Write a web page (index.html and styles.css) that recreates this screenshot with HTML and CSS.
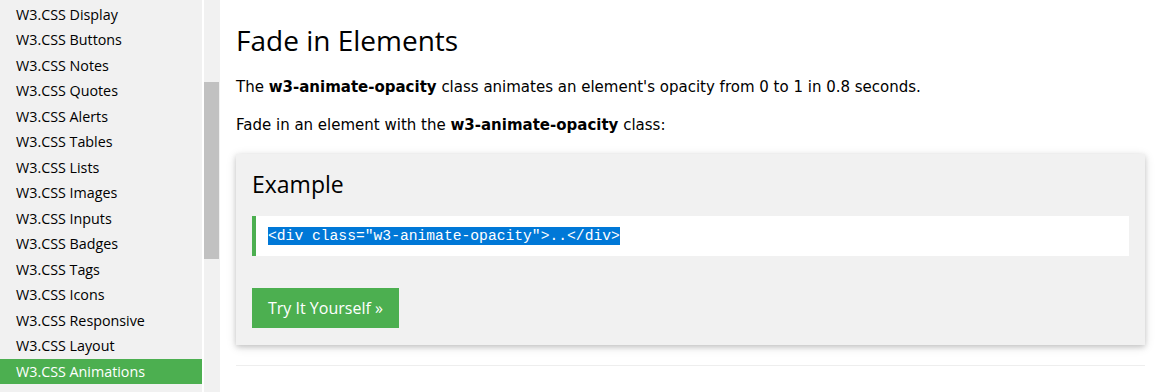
FILE: index.html
```html
<!DOCTYPE html>
<html lang="en">
<head>
    <meta charset="UTF-8">
    <meta name="viewport" content="width=device-width, initial-scale=1.0">
    <title>W3.CSS Animations</title>
    <link rel="stylesheet" href="styles.css">
</head>
<body>

<div class="layout">
    <div class="sidebar">
        <div class="nav">
            <a href="#">W3.CSS Display</a>
            <a href="#">W3.CSS Buttons</a>
            <a href="#">W3.CSS Notes</a>
            <a href="#">W3.CSS Quotes</a>
            <a href="#">W3.CSS Alerts</a>
            <a href="#">W3.CSS Tables</a>
            <a href="#">W3.CSS Lists</a>
            <a href="#">W3.CSS Images</a>
            <a href="#">W3.CSS Inputs</a>
            <a href="#">W3.CSS Badges</a>
            <a href="#">W3.CSS Tags</a>
            <a href="#">W3.CSS Icons</a>
            <a href="#">W3.CSS Responsive</a>
            <a href="#">W3.CSS Layout</a>
            <a href="#" class="active">W3.CSS Animations</a>
        </div>
    </div>
    <div class="scrollbar">
        <div class="thumb"></div>
    </div>

    <div class="main">
        <h1>Fade in Elements</h1>
        <p>The <b>w3-animate-opacity</b> class animates an element's opacity from 0 to 1 in 0.8 seconds.</p>
        <p>Fade in an element with the <b>w3-animate-opacity</b> class:</p>

        <div class="example">
            <h2>Example</h2>
            <div class="code"><span class="selected">&lt;div class="w3-animate-opacity"&gt;..&lt;/div&gt;</span></div>
            <a href="#" class="btn">Try It Yourself &raquo;</a>
        </div>

        <hr>
    </div>
</div>

</body>
</html>
```

FILE: styles.css
```css
body {
    margin: 0;
    background: white;
    color: black;
    font-family: "DejaVu Sans", Verdana, sans-serif;
    font-size: 15px;
    overflow: hidden;
}
.layout {
    display: flex;
    height: 392px;
}
.sidebar {
    width: 202px;
    background: #f1f1f1;
    border-right: 2px solid white;
    overflow: hidden;
}
.nav {
    padding-top: 1.5px;
}
.nav a {
    display: block;
    height: 25.5px;
    line-height: 25.5px;
    padding-left: 16px;
    color: black;
    text-decoration: none;
    font-family: "Open Sans", "Noto Sans", sans-serif;
    font-size: 14.3px;
}
.nav a.active {
    background: #4CAF50;
    color: white;
}
.scrollbar {
    width: 16px;
    background: #f1f1f1;
}
.thumb {
    margin-top: 82px;
    width: 15px;
    height: 177px;
    background: #c1c1c1;
}
.main {
    flex: 1;
    padding: 0 20px 0 16px;
}
h1 {
    font-family: "Open Sans", "Noto Sans", sans-serif;
    font-weight: normal;
    font-size: 28px;
    margin: 21px 0 0;
    line-height: 39px;
}
p {
    margin: 16px 0 0;
    line-height: 22px;
}
.example {
    margin-top: 18px;
    background: #f1f1f1;
    padding: 8px 16px 17px;
    box-shadow: 0 2px 5px rgba(0, 0, 0, 0.16), 0 2px 10px rgba(0, 0, 0, 0.12);
}
h2 {
    font-family: "Open Sans", "Noto Sans", sans-serif;
    font-weight: normal;
    font-size: 23px;
    line-height: 36px;
    margin: 4px 0 14px;
}
.code {
    background: white;
    border-left: 4px solid #4CAF50;
    padding: 8px 12px;
    font-family: "Liberation Mono", "DejaVu Sans Mono", monospace;
    font-size: 14.67px;
    line-height: 24px;
}
.selected {
    background: #0078d7;
    color: white;
    padding: 1px 0;
}
.btn {
    display: inline-block;
    margin-top: 32px;
    background: #4CAF50;
    color: white;
    text-decoration: none;
    font-family: "Open Sans", "Noto Sans", sans-serif;
    font-size: 16px;
    line-height: 24px;
    padding: 8px 16px;
}
hr {
    border: none;
    border-top: 1px solid #eee;
    margin: 20px 0 0;
}
```
